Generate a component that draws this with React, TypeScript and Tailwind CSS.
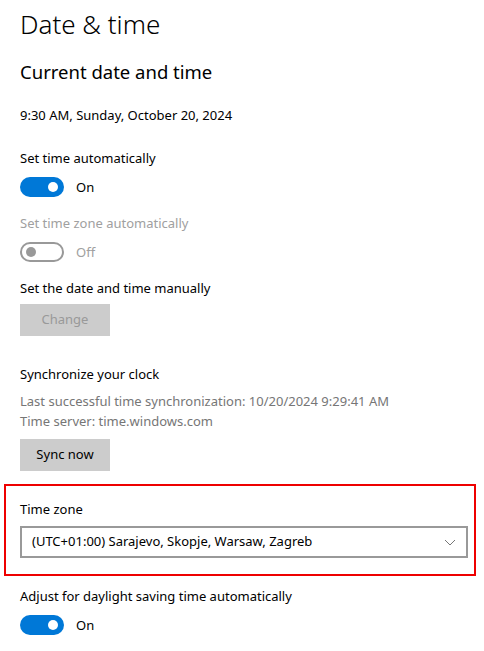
import React from 'react';

const font = { fontFamily: '"Noto Sans", "Open Sans", sans-serif' };

const Toggle = ({ on, disabled }: { on: boolean; disabled?: boolean }) => (
  <div className="flex items-center h-5">
    {on ? (
      <div className="w-[44px] h-5 rounded-full bg-[#0078d7] flex items-center justify-end pr-[6px]">
        <div className="w-[10px] h-[10px] rounded-full bg-white" />
      </div>
    ) : (
      <div className="w-[44px] h-5 rounded-full border-2 border-[#999999] flex items-center pl-[4px]">
        <div className="w-[10px] h-[10px] rounded-full bg-[#999999]" />
      </div>
    )}
    <span
      className={`ml-3 text-[13px] leading-5 ${disabled ? 'text-[#a0a0a0]' : 'text-black'}`}
    >
      {on ? 'On' : 'Off'}
    </span>
  </div>
);

const Label = ({ children, muted, className = '' }: { children: React.ReactNode; muted?: boolean; className?: string }) => (
  <div className={`text-[13px] leading-5 ${muted ? 'text-[#a0a0a0]' : 'text-black'} ${className}`}>
    {children}
  </div>
);

export default function App() {
  return (
    <div className="w-[484px] h-[651px] bg-white overflow-hidden" style={font}>
      <div className="px-5">
        <h1 className="pt-[6px] text-[26px] leading-[36px] font-light text-black">Date &amp; time</h1>
        <h2 className="mt-4 text-[18.5px] leading-7 text-black">Current date and time</h2>
        <Label className="mt-[19px]">9:30 AM, Sunday, October 20, 2024</Label>

        <Label className="mt-[23px]">Set time automatically</Label>
        <div className="mt-[9px]">
          <Toggle on />
        </div>

        <Label muted className="mt-4">Set time zone automatically</Label>
        <div className="mt-[9px]">
          <Toggle on={false} disabled />
        </div>

        <Label className="mt-4">Set the date and time manually</Label>
        <button className="mt-[6px] w-[90px] h-8 bg-[#cccccc] text-[13px] text-[#999999] block">
          Change
        </button>

        <Label className="mt-7">Synchronize your clock</Label>
        <div className="mt-[7px] text-[13px] leading-5 text-[#767676]">
          <div>Last successful time synchronization: 10/20/2024 9:29:41 AM</div>
          <div>Time server: time.windows.com</div>
        </div>
        <button className="mt-2 w-[90px] h-8 bg-[#cccccc] text-[13px] text-black block">
          Sync now
        </button>

        <div className="mt-[13px] -ml-4 w-[472px] border-2 border-[#ee0000] pt-[13px] pb-4 pl-[14px]">
          <Label>Time zone</Label>
          <div className="mt-[7px] w-[448px] h-8 border-2 border-[#999999] flex items-center justify-between pl-[10px] pr-[10px]">
            <span className="text-[13px] text-black">(UTC+01:00) Sarajevo, Skopje, Warsaw, Zagreb</span>
            <svg width="12" height="7" viewBox="0 0 12 7" fill="none">
              <path d="M1 1l5 5 5-5" stroke="#777777" strokeWidth="1" />
            </svg>
          </div>
        </div>

        <Label className="mt-[10px]">Adjust for daylight saving time automatically</Label>
        <div className="mt-[9px]">
          <Toggle on />
        </div>
      </div>
    </div>
  );
}
